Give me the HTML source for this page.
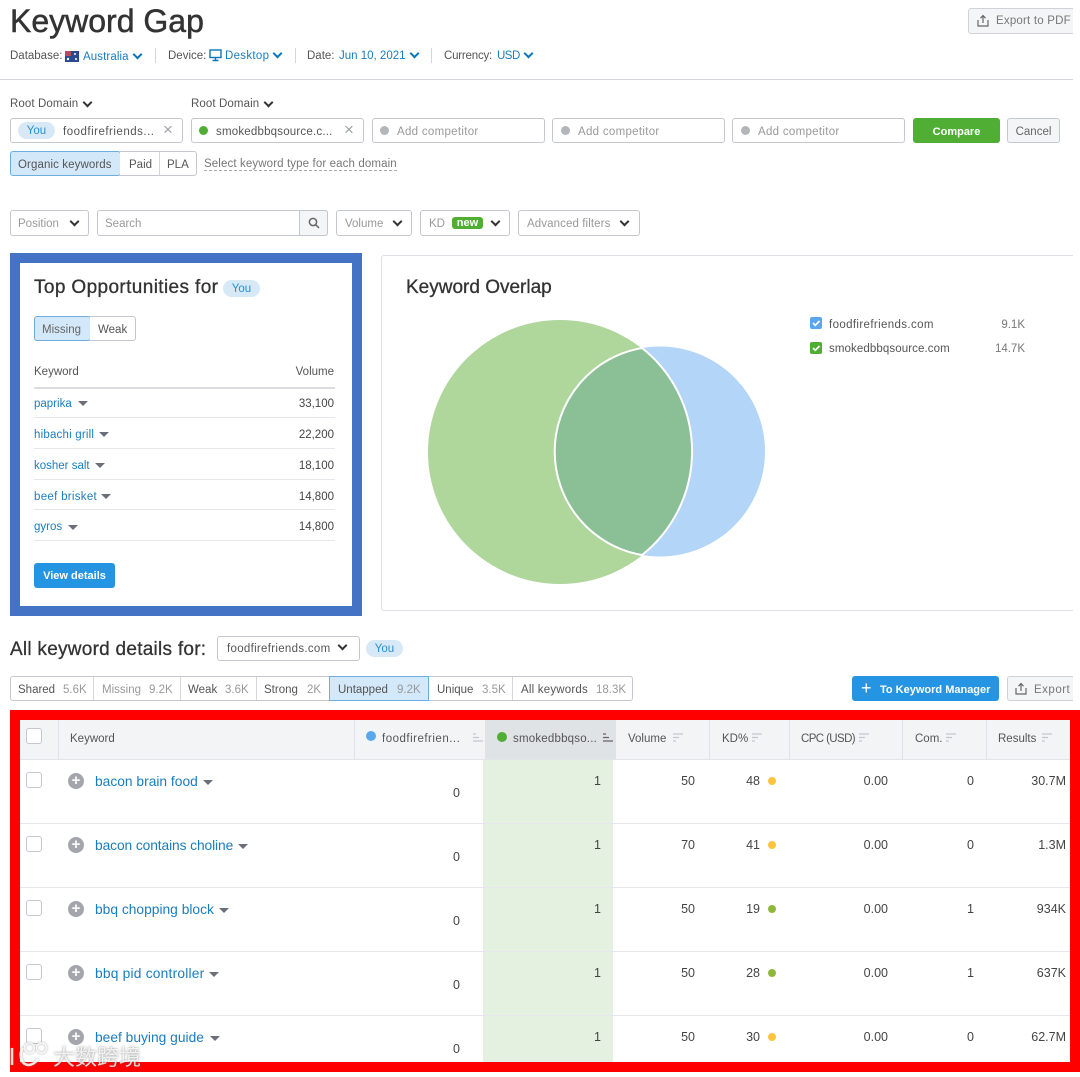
<!DOCTYPE html>
<html><head><meta charset="utf-8"><style>
html,body{margin:0;padding:0;background:#fff}
body{position:relative;width:1080px;height:1077px;overflow:hidden;font-family:"Liberation Sans","Noto Sans CJK SC",sans-serif;font-size:11.5px;color:#555;filter:blur(.3px)}
.t{position:absolute;white-space:nowrap;line-height:16px;padding-top:1px}
.r{text-align:right}
.b{position:absolute;box-sizing:border-box;border:1px solid #c4c7cf;border-radius:3px;background:#fff}
.g{color:#999}.l{color:#1a7dbf}.d{color:#444}
.s1{letter-spacing:.1px}.s2{letter-spacing:.2px}.s3{letter-spacing:.3px}.s5{letter-spacing:.5px}
.k{position:absolute;width:7px;height:7px;box-sizing:border-box;border-right:2.2px solid #333;border-bottom:2.2px solid #333;transform:rotate(45deg)}
.kb{border-color:#0a76b8}
.dot{position:absolute;border-radius:50%}
.tri{position:absolute;width:0;height:0;border-left:5px solid transparent;border-right:5px solid transparent;border-top:5px solid #6c6e79}
.line{position:absolute;background:#e6e7ec}
.pill{position:absolute;background:#d7e9f7;border-radius:9px;color:#2a8fd0;text-align:center;line-height:18px;height:17px}
.x{position:absolute;font-size:17px;color:#a0a2ab;line-height:16px}
.cb{position:absolute;width:16px;height:16px;box-sizing:border-box;border:1px solid #c4c7cf;border-radius:3px;background:#fff}
.plus{position:absolute;width:16px;height:16px;border-radius:50%;background:#a4a6ad;color:#fff;font-size:15px;font-weight:bold;line-height:15px;text-align:center}
.kw{position:absolute;white-space:nowrap;font-size:13.8px;line-height:18px;color:#1a7dbf;margin-top:1px}
.n{position:absolute;white-space:nowrap;font-size:12.5px;line-height:16px;text-align:right;color:#444}
.sep{position:absolute;top:719px;height:41px;width:1px;background:#e0e1e6}
.sort{position:absolute;width:11px;height:9px}
.h{position:absolute;white-space:nowrap;line-height:16px;color:#555;top:731px}
.hd{position:absolute;white-space:nowrap;font-size:19px;line-height:20px;color:#333;-webkit-text-stroke:.3px #333}
</style></head><body>

<div class="hd" style="left:10px;top:1px;font-size:32px;line-height:40px;-webkit-text-stroke:.5px #333">Keyword Gap</div>
<div class="t" style="left:10px;top:47px">Database:</div>
<svg style="position:absolute;left:65px;top:51px" width="14" height="11"><rect width="14" height="11" fill="#2b4a8f"/><rect width="6" height="5" fill="#b9495c"/><circle cx="10" cy="3" r="1" fill="#fff"/><circle cx="11" cy="8" r="1" fill="#fff"/><circle cx="3" cy="8" r="1.2" fill="#fff"/></svg>
<div class="t l s1" style="left:83px;top:48px">Australia</div>
<div class="k kb" style="left:134px;top:51px"></div>
<div class="line" style="left:155px;top:48px;width:1px;height:15px;background:#d5d6dc"></div>
<div class="t" style="left:168px;top:47px">Device:</div>
<svg style="position:absolute;left:209px;top:49px" width="13" height="13" fill="none" stroke="#0a76b8" stroke-width="1.4"><rect x="1" y="1" width="11" height="7.5"/><path d="M6.5 9v2M3.5 11.5h6"/></svg>
<div class="t l s3" style="left:225px;top:47px">Desktop</div>
<div class="k kb" style="left:274px;top:50px"></div>
<div class="line" style="left:295px;top:48px;width:1px;height:15px;background:#d5d6dc"></div>
<div class="t" style="left:307px;top:47px">Date:</div>
<div class="t l" style="left:339px;top:47px">Jun 10, 2021</div>
<div class="k kb" style="left:411px;top:50px"></div>
<div class="line" style="left:431px;top:48px;width:1px;height:15px;background:#d5d6dc"></div>
<div class="t" style="left:444px;top:47px;letter-spacing:-.2px">Currency:</div>
<div class="t l" style="left:497px;top:47px;letter-spacing:-.5px">USD</div>
<div class="k kb" style="left:525px;top:50px"></div>

<div class="b" style="left:968px;top:8px;width:110px;height:26px;background:#f4f5f6;border-color:#d0d2d8"></div>
<svg style="position:absolute;left:977px;top:14px" width="13" height="13" fill="none" stroke="#666" stroke-width="1.2"><path d="M1 6v6h10V6M6 9V2M3.5 4.2L6 1.5l2.5 2.7"/></svg>
<div class="t s2" style="left:996px;top:12px;color:#777">Export to PDF</div>
<div style="position:absolute;left:1073px;top:0;width:7px;height:700px;background:#fff"></div>
<div class="line" style="left:0;top:79px;width:1073px;background:#d5d6dc;height:1px"></div>

<div class="t s1" style="left:10px;top:95px">Root Domain</div><div class="k" style="left:84px;top:99px"></div>
<div class="t s1" style="left:191px;top:95px">Root Domain</div><div class="k" style="left:265px;top:99px"></div>

<div class="b" style="left:10px;top:118px;width:173px;height:25px"></div>
<div class="pill" style="left:18px;top:122px;width:37px">You</div>
<div class="t s5" style="left:63px;top:123px;color:#555">foodfirefriends...</div>
<div class="x" style="left:163px;top:122px">×</div>
<div class="b" style="left:191px;top:118px;width:173px;height:25px"></div>
<div class="dot" style="left:199px;top:126px;width:9px;height:9px;background:#4fae33"></div>
<div class="t s2" style="left:216px;top:123px;color:#555">smokedbbqsource.c...</div>
<div class="x" style="left:344px;top:122px">×</div>
<div class="b" style="left:372px;top:118px;width:173px;height:25px"></div>
<div class="dot" style="left:380px;top:126px;width:9px;height:9px;background:#b4b5bb"></div>
<div class="t g s3" style="left:397px;top:123px">Add competitor</div>
<div class="b" style="left:552px;top:118px;width:173px;height:25px"></div>
<div class="dot" style="left:561px;top:126px;width:9px;height:9px;background:#b4b5bb"></div>
<div class="t g s3" style="left:578px;top:123px">Add competitor</div>
<div class="b" style="left:732px;top:118px;width:173px;height:25px"></div>
<div class="dot" style="left:741px;top:126px;width:9px;height:9px;background:#b4b5bb"></div>
<div class="t g s3" style="left:758px;top:123px">Add competitor</div>
<div class="b" style="left:913px;top:118px;width:87px;height:25px;background:#4fae33;border-color:#4fae33"></div>
<div class="t" style="left:913px;width:87px;text-align:center;top:123px;color:#fff;font-weight:bold;font-size:11px">Compare</div>
<div class="b" style="left:1007px;top:118px;width:53px;height:25px;background:#f4f5f6"></div>
<div class="t" style="left:1007px;width:53px;text-align:center;top:123px;color:#666">Cancel</div>

<div class="b" style="left:10px;top:151px;width:111px;height:25px;background:#d3e8f9;border-color:#6eaedc"></div>
<div class="t s1" style="left:18px;top:156px;color:#555">Organic keywords</div>
<div class="b" style="left:120px;top:151px;width:40px;height:25px;border-left:0;border-radius:0"></div>
<div class="t" style="left:129px;top:156px">Paid</div>
<div class="b" style="left:159px;top:151px;width:38px;height:25px;border-left:1px solid #d5d6dc;border-radius:0 3px 3px 0"></div>
<div class="t" style="left:167px;top:156px">PLA</div>
<div class="t" style="left:204px;top:157px;color:#777;border-bottom:1px dashed #aaa;line-height:12px;letter-spacing:.12px">Select keyword type for each domain</div>

<div class="b" style="left:10px;top:210px;width:79px;height:26px"></div>
<div class="t g" style="left:18px;top:215px">Position</div><div class="k" style="left:71px;top:218px"></div>
<div class="b" style="left:97px;top:210px;width:231px;height:26px"></div>
<div class="t g" style="left:105px;top:215px">Search</div>
<div class="b" style="left:299px;top:210px;width:29px;height:26px;background:#f4f5f6;border-radius:0 3px 3px 0"></div>
<svg style="position:absolute;left:308px;top:217px" width="12" height="12" fill="none" stroke="#666" stroke-width="1.5"><circle cx="5" cy="5" r="3.6"/><path d="M7.8 7.8L11 11"/></svg>
<div class="b" style="left:336px;top:210px;width:76px;height:26px"></div>
<div class="t g" style="left:345px;top:215px">Volume</div><div class="k" style="left:394px;top:218px"></div>
<div class="b" style="left:420px;top:210px;width:90px;height:26px"></div>
<div class="t g" style="left:429px;top:215px">KD</div>
<div style="position:absolute;left:452px;top:217px;width:31px;height:12px;border-radius:3px;background:#4fae33;color:#fff;font-size:11px;font-weight:bold;line-height:12px;text-align:center">new</div>
<div class="k" style="left:492px;top:218px"></div>
<div class="b" style="left:518px;top:210px;width:122px;height:26px"></div>
<div class="t g s1" style="left:527px;top:215px">Advanced filters</div><div class="k" style="left:621px;top:218px"></div>

<!-- Top opportunities -->
<div style="position:absolute;box-sizing:border-box;left:10px;top:253px;width:352px;height:363px;border:10px solid #4472c4;background:#fff"></div>
<div class="hd" style="left:34px;top:278px;letter-spacing:.38px">Top Opportunities for</div>
<div class="pill" style="left:223px;top:280px;width:37px">You</div>
<div class="b" style="left:34px;top:316px;width:57px;height:25px;background:#d3e8f9;border-color:#6eaedc"></div>
<div class="t" style="left:42px;top:321px;color:#666">Missing</div>
<div class="b" style="left:90px;top:316px;width:46px;height:25px;border-left:0;border-radius:0 3px 3px 0"></div>
<div class="t" style="left:98px;top:321px">Weak</div>
<div class="t" style="left:34px;top:363px">Keyword</div>
<div class="t r" style="right:746px;top:363px">Volume</div>
<div class="line" style="left:34px;top:387px;width:301px;height:2px;background:#dcdde2"></div>
<div class="t l" style="left:34px;top:395px">paprika</div><div class="tri" style="left:78px;top:401px"></div><div class="t r d" style="right:746px;top:395px">33,100</div><div class="line" style="left:34px;top:417px;width:301px;height:1px"></div>
<div class="t l s2" style="left:34px;top:426px">hibachi grill</div><div class="tri" style="left:99px;top:432px"></div><div class="t r d" style="right:746px;top:426px">22,200</div><div class="line" style="left:34px;top:448px;width:301px;height:1px"></div>
<div class="t l" style="left:34px;top:457px">kosher salt</div><div class="tri" style="left:95px;top:463px"></div><div class="t r d" style="right:746px;top:457px">18,100</div><div class="line" style="left:34px;top:479px;width:301px;height:1px"></div>
<div class="t l s3" style="left:34px;top:488px">beef brisket</div><div class="tri" style="left:101px;top:494px"></div><div class="t r d" style="right:746px;top:488px">14,800</div><div class="line" style="left:34px;top:509px;width:301px;height:1px"></div>
<div class="t l" style="left:34px;top:518px">gyros</div><div class="tri" style="left:68px;top:525px"></div><div class="t r d" style="right:746px;top:518px">14,800</div><div class="line" style="left:34px;top:540px;width:301px;height:1px"></div>
<div style="position:absolute;left:34px;top:563px;width:81px;height:25px;border-radius:3px;background:#2595e3;color:#fff;font-size:11px;font-weight:bold;line-height:26px;text-align:center">View details</div>

<!-- Overlap -->
<div style="position:absolute;box-sizing:border-box;left:381px;top:255px;width:692px;height:356px;border:1px solid #dfe0e6;border-right:0;border-radius:3px 0 0 3px"></div>
<div class="hd" style="left:406px;top:278px">Keyword Overlap</div>
<svg style="position:absolute;left:420px;top:310px" width="360" height="285">
<circle cx="240" cy="141.500" r="105" fill="#b3d5f7"/>
<circle cx="140" cy="142" r="132" fill="#afd69b"/>
<clipPath id="c"><circle cx="140" cy="142" r="132"/></clipPath>
<circle cx="240" cy="141.500" r="105" fill="#8bbf96" clip-path="url(#c)"/>
<path d="M222 38A132 132 0 0 1 222 245A105 105 0 0 1 222 38Z" fill="none" stroke="#fff" stroke-width="2"/>
</svg>
<svg style="position:absolute;left:810px;top:317px" width="12" height="12"><rect width="12" height="12" rx="2" fill="#5ba7ee"/><path d="M3 6l2.300 2.300L9.500 4" fill="none" stroke="#fff" stroke-width="1.700"/></svg>
<svg style="position:absolute;left:810px;top:342px" width="12" height="12"><rect width="12" height="12" rx="2" fill="#4fae33"/><path d="M3 6l2.300 2.300L9.500 4" fill="none" stroke="#fff" stroke-width="1.700"/></svg>
<div class="t" style="left:829px;top:316px;letter-spacing:.37px">foodfirefriends.com</div><div class="t r" style="right:55px;top:316px;color:#777">9.1K</div>
<div class="t s1" style="left:829px;top:340px">smokedbbqsource.com</div><div class="t r" style="right:55px;top:340px;color:#777">14.7K</div>

<!-- All keyword details -->
<div class="hd" style="left:10px;top:640px;letter-spacing:.26px">All keyword details for:</div>
<div class="b" style="left:217px;top:636px;width:143px;height:25px"></div>
<div class="t s3" style="left:227px;top:640px">foodfirefriends.com</div><div class="k" style="left:339px;top:642px"></div>
<div class="pill" style="left:366px;top:640px;width:37px">You</div>

<div class="b" style="left:10px;top:676px;width:623px;height:25px"></div>
<div class="b" style="left:329px;top:676px;width:100px;height:25px;background:#d3e8f9;border-color:#6eaedc;border-radius:0"></div>
<div class="line" style="left:93px;top:677px;width:1px;height:23px;background:#d5d6dc"></div>
<div class="line" style="left:180px;top:677px;width:1px;height:23px;background:#d5d6dc"></div>
<div class="line" style="left:256px;top:677px;width:1px;height:23px;background:#d5d6dc"></div>
<div class="line" style="left:512px;top:677px;width:1px;height:23px;background:#d5d6dc"></div>
<div class="t" style="left:18px;top:681px">Shared</div><div class="t g" style="left:63px;top:681px">5.6K</div>
<div class="t g" style="left:102px;top:681px">Missing</div><div class="t g" style="left:149px;top:681px">9.2K</div>
<div class="t" style="left:188px;top:681px">Weak</div><div class="t g" style="left:225px;top:681px">3.6K</div>
<div class="t" style="left:264px;top:681px">Strong</div><div class="t g" style="left:307px;top:681px">2K</div>
<div class="t" style="left:338px;top:681px">Untapped</div><div class="t g" style="left:397px;top:681px">9.2K</div>
<div class="t" style="left:437px;top:681px">Unique</div><div class="t g" style="left:482px;top:681px">3.5K</div>
<div class="t s2" style="left:521px;top:681px">All keywords</div><div class="t g" style="left:596px;top:681px">18.3K</div>
<div style="position:absolute;left:852px;top:676px;width:147px;height:25px;border-radius:3px;background:#2595e3"></div>
<div class="t" style="left:861px;top:677px;color:#fff;font-size:18px;line-height:20px">+</div>
<div class="t" style="left:880px;top:681px;color:#fff;font-weight:bold;font-size:11px">To Keyword Manager</div>
<div class="b" style="left:1007px;top:676px;width:80px;height:25px;background:#f4f5f6;border-color:#d0d2d8"></div>
<svg style="position:absolute;left:1015px;top:682px" width="13" height="13" fill="none" stroke="#666" stroke-width="1.2"><path d="M1 6v6h10V6M6 9V2M3.500 4.200L6 1.500l2.500 2.700"/></svg>
<div class="t s5" style="left:1034px;top:681px;color:#777">Export</div>
<div style="position:absolute;left:1073px;top:670px;width:7px;height:38px;background:#fff"></div>

<!-- Table -->
<div style="position:absolute;left:20px;top:720px;width:1050px;height:40px;background:#f3f4f6"></div>
<div style="position:absolute;left:485px;top:720px;width:131px;height:40px;background:#e0e3e6"></div>
<div style="position:absolute;left:483px;top:760px;width:130px;height:302px;background:#e5f1e0"></div>
<div class="sep" style="left:58px"></div><div class="sep" style="left:354px"></div><div class="sep" style="left:709px"></div><div class="sep" style="left:789px"></div><div class="sep" style="left:902px"></div><div class="sep" style="left:986px"></div>
<div class="line" style="left:20px;top:759px;width:1050px;height:1px;background:#e3e4e9"></div>
<div class="line" style="left:20px;top:823px;width:1050px;height:1px"></div>
<div class="line" style="left:20px;top:887px;width:1050px;height:1px"></div>
<div class="line" style="left:20px;top:951px;width:1050px;height:1px"></div>
<div class="line" style="left:20px;top:1015px;width:1050px;height:1px"></div>
<div class="cb" style="left:26px;top:728px"></div>
<div class="h" style="left:70px">Keyword</div>
<div class="dot" style="left:366px;top:731px;width:10px;height:10px;background:#5ba7ee"></div>
<div class="h" style="left:382px;letter-spacing:.5px">foodfirefrien...</div>
<svg class="sort" style="left:472px;top:733px"><path d="M1 1h3M1 4.500h6M1 8h10" stroke="#c4c6cc" stroke-width="1.200"/></svg>
<div class="dot" style="left:497px;top:732px;width:10px;height:10px;background:#4fae33"></div>
<div class="h" style="left:513px;letter-spacing:.2px">smokedbbqso...</div>
<svg class="sort" style="left:602px;top:733px"><path d="M1 1h3M1 4.500h6M1 8h10" stroke="#666" stroke-width="1.200"/></svg>
<div class="h" style="left:628px">Volume</div><svg class="sort" style="left:672px;top:733px"><path d="M1 1h10M1 4.500h6M1 8h3" stroke="#c4c6cc" stroke-width="1.200"/></svg>
<div class="h" style="left:722px">KD%</div><svg class="sort" style="left:751px;top:733px"><path d="M1 1h10M1 4.500h6M1 8h3" stroke="#c4c6cc" stroke-width="1.200"/></svg>
<div class="h" style="left:801px;letter-spacing:-.6px">CPC (USD)</div><svg class="sort" style="left:858px;top:733px"><path d="M1 1h10M1 4.500h6M1 8h3" stroke="#c4c6cc" stroke-width="1.200"/></svg>
<div class="h" style="left:915px">Com.</div><svg class="sort" style="left:945px;top:733px"><path d="M1 1h10M1 4.500h6M1 8h3" stroke="#c4c6cc" stroke-width="1.200"/></svg>
<div class="h" style="left:998px">Results</div><svg class="sort" style="left:1041px;top:733px"><path d="M1 1h10M1 4.500h6M1 8h3" stroke="#c4c6cc" stroke-width="1.200"/></svg>

<!-- row 1 -->
<div class="cb" style="left:26px;top:772px"></div><div class="plus" style="left:68px;top:773px">+</div>
<div class="kw" style="left:95px;top:772px">bacon brain food</div><div class="tri" style="left:203px;top:780px"></div>
<div class="n" style="right:620px;top:785px">0</div><div class="n" style="right:479px;top:773px">1</div><div class="n" style="right:385px;top:773px">50</div><div class="n" style="right:320px;top:773px">48</div>
<div class="dot" style="left:768px;top:777px;width:8px;height:8px;background:#ffc53d"></div><div class="n" style="right:192px;top:773px">0.00</div><div class="n" style="right:106px;top:773px">0</div><div class="n" style="right:14px;top:773px">30.7M</div>
<!-- row 2 -->
<div class="cb" style="left:26px;top:836px"></div><div class="plus" style="left:68px;top:837px">+</div>
<div class="kw" style="left:95px;top:836px;letter-spacing:-.1px">bacon contains choline</div><div class="tri" style="left:238px;top:844px"></div>
<div class="n" style="right:620px;top:849px">0</div><div class="n" style="right:479px;top:837px">1</div><div class="n" style="right:385px;top:837px">70</div><div class="n" style="right:320px;top:837px">41</div>
<div class="dot" style="left:768px;top:841px;width:8px;height:8px;background:#ffc53d"></div><div class="n" style="right:192px;top:837px">0.00</div><div class="n" style="right:106px;top:837px">0</div><div class="n" style="right:14px;top:837px">1.3M</div>
<!-- row 3 -->
<div class="cb" style="left:26px;top:900px"></div><div class="plus" style="left:68px;top:901px">+</div>
<div class="kw" style="left:95px;top:900px">bbq chopping block</div><div class="tri" style="left:219px;top:908px"></div>
<div class="n" style="right:620px;top:913px">0</div><div class="n" style="right:479px;top:901px">1</div><div class="n" style="right:385px;top:901px">50</div><div class="n" style="right:320px;top:901px">19</div>
<div class="dot" style="left:768px;top:905px;width:8px;height:8px;background:#8fb83a"></div><div class="n" style="right:192px;top:901px">0.00</div><div class="n" style="right:106px;top:901px">1</div><div class="n" style="right:14px;top:901px">934K</div>
<!-- row 4 -->
<div class="cb" style="left:26px;top:964px"></div><div class="plus" style="left:68px;top:965px">+</div>
<div class="kw" style="left:95px;top:964px;letter-spacing:.2px">bbq pid controller</div><div class="tri" style="left:209px;top:972px"></div>
<div class="n" style="right:620px;top:977px">0</div><div class="n" style="right:479px;top:965px">1</div><div class="n" style="right:385px;top:965px">50</div><div class="n" style="right:320px;top:965px">28</div>
<div class="dot" style="left:768px;top:969px;width:8px;height:8px;background:#8fb83a"></div><div class="n" style="right:192px;top:965px">0.00</div><div class="n" style="right:106px;top:965px">1</div><div class="n" style="right:14px;top:965px">637K</div>
<!-- row 5 -->
<div class="cb" style="left:26px;top:1028px"></div><div class="plus" style="left:68px;top:1029px">+</div>
<div class="kw" style="left:95px;top:1028px">beef buying guide</div><div class="tri" style="left:210px;top:1036px"></div>
<div class="n" style="right:620px;top:1041px">0</div><div class="n" style="right:479px;top:1029px">1</div><div class="n" style="right:385px;top:1029px">50</div><div class="n" style="right:320px;top:1029px">30</div>
<div class="dot" style="left:768px;top:1033px;width:8px;height:8px;background:#ffc53d"></div><div class="n" style="right:192px;top:1029px">0.00</div><div class="n" style="right:106px;top:1029px">0</div><div class="n" style="right:14px;top:1029px">62.7M</div>

<!-- Red frame -->
<div style="position:absolute;left:10px;top:710px;width:1070px;height:10px;background:#f00"></div>
<div style="position:absolute;left:10px;top:710px;width:10px;height:362px;background:#f00"></div>
<div style="position:absolute;left:1070px;top:710px;width:10px;height:362px;background:#f00"></div>
<div style="position:absolute;left:10px;top:1062px;width:1070px;height:10px;background:#f00"></div>

<!-- Watermark -->
<svg style="position:absolute;left:8px;top:1038px;filter:drop-shadow(0 0 1px rgba(110,110,110,.7))" width="46" height="34" fill="none" stroke="#fff" stroke-opacity=".85" stroke-width="2.500"><path d="M4 10v17M15 10c-4 5-3 16 5 17 5 0 8-3 10-6"/><circle cx="21.500" cy="10" r="5" stroke-width="1.500"/><circle cx="33.500" cy="10" r="5" stroke-width="1.500"/></svg>
<div class="t" style="left:53px;top:1044px;font-size:22px;line-height:26px;color:rgba(255,255,255,.8);text-shadow:0 0 2px rgba(90,90,90,.7)">大数跨境</div>
</body></html>
